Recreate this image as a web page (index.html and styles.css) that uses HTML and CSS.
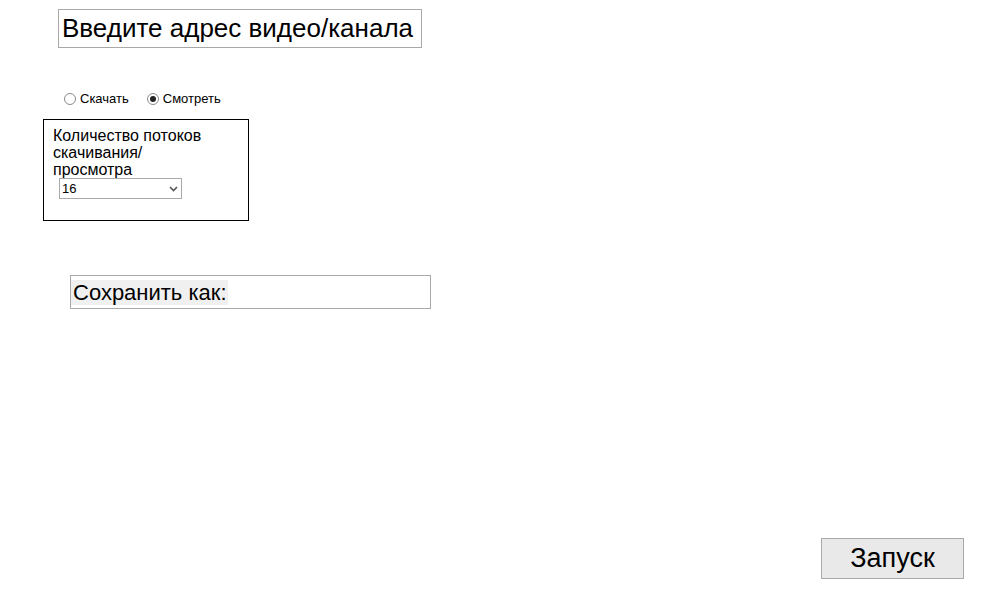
FILE: index.html
```html
<!DOCTYPE html>
<html lang="ru">
<head>
    <meta charset="UTF-8">
    <title>Загрузчик видео</title>
    <link rel="stylesheet" href="styles.css">
</head>
<body>
    <div class="page">
        <input type="text" class="urlInput" value="Введите адрес видео/канала">

        <div class="modeRow">
            <label class="modeOption"><input type="radio" name="mode">Скачать</label>
            <label class="modeOption"><input type="radio" name="mode" checked>Смотреть</label>
        </div>

        <div class="threadsBox">
            <div class="threadsLabel">Количество потоков скачивания/ просмотра</div>
            <span class="selectWrap">
                <select class="threadsSelect">
                    <option>16</option>
                </select>
                <svg class="selectArrow" width="9" height="6" viewBox="0 0 9 6">
                    <path d="M1 1 L4.5 4.5 L8 1" fill="none" stroke="#555" stroke-width="1.6"/>
                </svg>
            </span>
        </div>

        <div class="saveRow">
            <span class="saveLabel">Сохранить как:</span>
        </div>

        <div class="footer">
            <button class="startButton">Запуск</button>
        </div>
    </div>
</body>
</html>
```

FILE: styles.css
```css
body {
    margin: 0;
    background: white;
    color: black;
    font-family: "Liberation Sans", Arial, sans-serif;
}
.page {
    display: flex;
    flex-direction: column;
    align-items: flex-start;
    height: 595px;
    box-sizing: border-box;
}
.urlInput {
    margin: 9px 0 0 58px;
    width: 364px;
    height: 39px;
    box-sizing: border-box;
    border: 1px solid #a9a9a9;
    padding: 0 3px;
    font-family: inherit;
    font-size: 26px;
    color: black;
    outline: none;
}
.modeRow {
    display: flex;
    gap: 18px;
    margin: 43px 0 0 64px;
    font-size: 13px;
}
.modeOption {
    display: flex;
    align-items: center;
    gap: 4px;
}
.modeOption input {
    appearance: none;
    margin: 0;
    width: 12px;
    height: 12px;
    border: 1px solid #8a8a8a;
    border-radius: 50%;
    background: white;
    box-sizing: border-box;
    display: grid;
    place-items: center;
}
.modeOption input:checked::after {
    content: "";
    width: 6px;
    height: 6px;
    border-radius: 50%;
    background: #222;
}
.threadsBox {
    margin: 13px 0 0 43px;
    width: 206px;
    height: 102px;
    box-sizing: border-box;
    border: 1px solid black;
    padding: 7px 9px;
}
.threadsLabel {
    font-size: 16px;
    line-height: 17px;
    width: 170px;
}
.selectWrap {
    position: relative;
    display: inline-block;
    margin-left: 6px;
}
.threadsSelect {
    appearance: none;
    display: block;
    width: 123px;
    height: 21px;
    font-family: inherit;
    font-size: 13px;
    color: black;
    border: 1px solid #a9a9a9;
    border-radius: 0;
    background: white;
    padding: 0 2px;
}
.selectArrow {
    position: absolute;
    right: 4px;
    top: 8px;
    pointer-events: none;
}
.saveRow {
    margin: 54px 0 0 70px;
    width: 361px;
    height: 34px;
    box-sizing: border-box;
    border: 1px solid #a9a9a9;
    display: flex;
    align-items: center;
}
.saveLabel {
    background: #f0f0f0;
    font-size: 22px;
    line-height: 25px;
    padding: 0 1px 0 2px;
}
.footer {
    margin-top: auto;
    align-self: stretch;
    display: flex;
    justify-content: flex-end;
    padding: 0 34px 16px 0;
}
.startButton {
    width: 143px;
    height: 41px;
    border: 1px solid #a9a9a9;
    background: #e9e9e9;
    font-family: inherit;
    font-size: 27px;
    color: black;
    padding: 0;
}
```
